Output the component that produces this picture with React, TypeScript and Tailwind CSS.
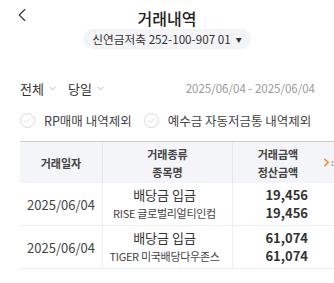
import { ChevronDown, ChevronLeft, ChevronRight, Check } from "lucide-react";

const rows = [
  { date: "2025/06/04", kind: "배당금 입금", name: "RISE 글로벌리얼티인컴", amount: "19,456", settle: "19,456" },
  { date: "2025/06/04", kind: "배당금 입금", name: "TIGER 미국배당다우존스", amount: "61,074", settle: "61,074" },
];

function CheckOption({ label }: { label: string }) {
  return (
    <div className="flex items-center gap-[9px]">
      <span className="w-[15px] h-[15px] rounded-full border border-[#d6d9de] flex items-center justify-center">
        <Check size={9} strokeWidth={1.6} className="text-[#c4c8ce]" />
      </span>
      <span className="text-[12.5px] text-[#444]">{label}</span>
    </div>
  );
}

export default function App() {
  return (
    <div
      className="w-[334px] h-[283px] bg-white overflow-hidden relative"
      style={{ fontFamily: '"Noto Sans CJK KR", "Noto Sans", sans-serif' }}
    >
      <header className="relative h-[28px] flex items-center justify-center">
        <ChevronLeft size={22} strokeWidth={1.2} className="absolute left-[11px] top-[4px] text-[#333]" />
        <h1 className="text-[16px] font-medium text-[#222] leading-none mt-[8px]">거래내역</h1>
      </header>
      <div className="flex justify-center mt-[1px]">
        <div className="h-[20px] px-[9px] rounded-full bg-[#f3f4f6] flex items-center gap-[5px]">
          <span className="text-[11.7px] text-[#333]">신연금저축 252-100-907 01</span>
          <span className="text-[6px] text-[#333]">▼</span>
        </div>
      </div>

      <div className="flex items-center justify-between pl-[20px] pr-[19px] mt-[30px]">
        <div className="flex items-center gap-[10px]">
          <div className="flex items-center gap-[3px]">
            <span className="text-[13px] text-[#333]">전체</span>
            <ChevronDown size={11} strokeWidth={1.3} className="text-[#888]" />
          </div>
          <div className="flex items-center gap-[3px]">
            <span className="text-[13px] text-[#333]">당일</span>
            <ChevronDown size={11} strokeWidth={1.3} className="text-[#888]" />
          </div>
        </div>
        <span className="text-[11.5px] text-[#9a9a9a]">2025/06/04 - 2025/06/04</span>
      </div>

      <div className="flex items-center gap-[12px] pl-[20px] mt-[13px]">
        <CheckOption label="RP매매 내역제외" />
        <CheckOption label="예수금 자동저금통 내역제외" />
      </div>

      <div className="ml-[20px] mt-[11px] border-t border-[#c9ccd1]">
        <div className="grid grid-cols-[83px_130px_90px_11px] h-[41px] bg-[#f3f5f8] text-[11px] font-bold text-[#444]">
          <div className="flex items-center justify-center border-r border-[#e3e6ea]">거래일자</div>
          <div className="flex flex-col items-center justify-center leading-[18px] border-r border-[#e3e6ea]">
            <span>거래종류</span>
            <span>종목명</span>
          </div>
          <div className="flex flex-col items-center justify-center leading-[18px]">
            <span>거래금액</span>
            <span>정산금액</span>
          </div>
          <div className="flex items-center">
            <ChevronRight size={15} strokeWidth={3} className="text-[#f08a24] -ml-[3px]" />
            <span className="text-[9px] text-[#999] leading-none -ml-[2px]">:</span>
          </div>
        </div>
        {rows.map((r, i) => (
          <div key={i} className="grid grid-cols-[83px_130px_95px] h-[43px] border-b border-[#eceef1]">
            <div className="flex items-center justify-center border-r border-[#eceef1] text-[13px] text-[#444]">
              {r.date}
            </div>
            <div className="flex flex-col items-center justify-center border-r border-[#eceef1] pr-[6px]">
              <span className="text-[13px] text-[#333] leading-[18px]">{r.kind}</span>
              <span className="text-[11px] text-[#444] leading-[18px] tracking-[-0.3px]">{r.name}</span>
            </div>
            <div className="flex flex-col items-end justify-center pr-[20px] text-[13px] font-bold text-[#333] leading-[18px]">
              <span>{r.amount}</span>
              <span>{r.settle}</span>
            </div>
          </div>
        ))}
      </div>
    </div>
  );
}
